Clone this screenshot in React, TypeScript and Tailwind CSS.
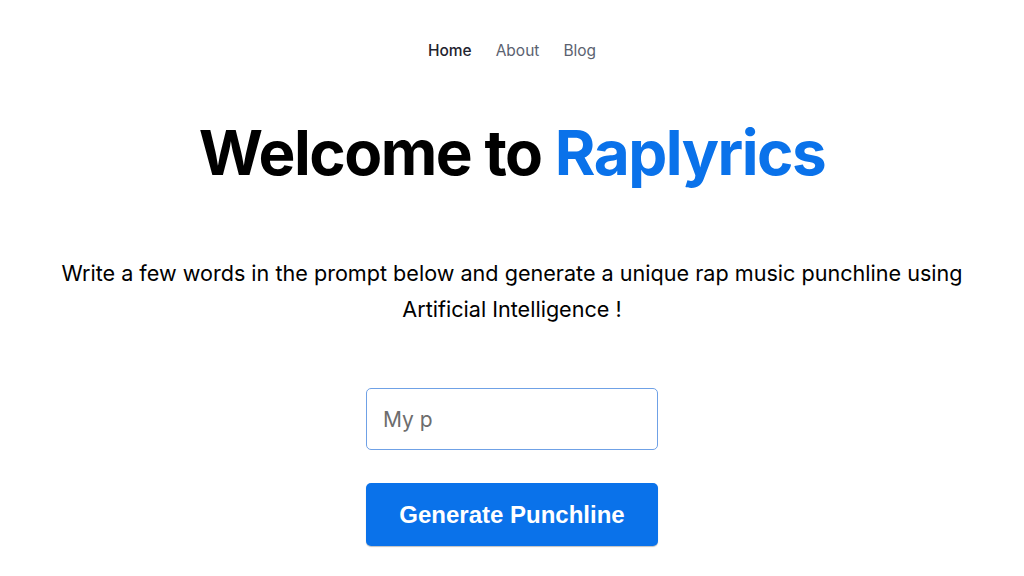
import React from 'react';

const App: React.FC = () => {
  return (
    <div className="min-h-screen bg-white text-black" style={{ fontFamily: 'Inter, "Noto Sans", sans-serif' }}>
      <nav className="flex justify-center gap-6 pt-[41px] text-[15.5px] leading-[20px]">
        <a className="font-medium text-[#1f2430]">Home</a>
        <a className="text-[#5b6270]">About</a>
        <a className="text-[#5b6270]">Blog</a>
      </nav>

      <main className="flex flex-col items-center">
        <h1 className="mt-[54px] text-[62px] leading-[76px] font-bold tracking-[-1.5px]">
          Welcome to <span className="text-[#0a72ea]">Raplyrics</span>
        </h1>

        <p className="mt-[64px] w-[940px] text-center text-[21.6px] leading-[36px]">
          Write a few words in the prompt below and generate a unique rap music punchline using Artificial Intelligence !
        </p>

        <div className="mt-[61px] flex flex-col gap-[33px] w-[292px]">
          <input
            className="h-[62px] w-full rounded-[5px] border border-[#6fa1e6] px-4 text-[21px] text-[#6d6d6d] outline-none"
            defaultValue="My p"
          />
          <button
            className="h-[63px] w-full rounded-[5px] bg-[#0a72ea] text-[24px] font-bold text-white shadow-[0_1px_1px_rgba(0,0,0,0.25)]"
            style={{ fontFamily: '"Liberation Sans", Arial, sans-serif' }}
          >
            Generate Punchline
          </button>
        </div>
      </main>
    </div>
  );
};

export default App;
